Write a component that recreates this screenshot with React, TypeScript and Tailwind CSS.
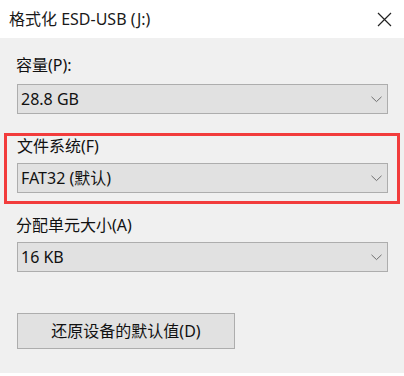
import React from "react";

function Chevron() {
  return (
    <svg width="11" height="7" viewBox="0 0 11 7" className="shrink-0">
      <path d="M0.5 0.8 L5.5 5.6 L10.5 0.8" fill="none" stroke="#6e6e6e" strokeWidth="1" />
    </svg>
  );
}

function Select({ value }: { value: string }) {
  return (
    <div className="flex h-[30px] w-[371px] items-center justify-between border border-[#adadad] bg-[#e1e1e1] pl-[3px] pr-[5px] text-[16px] text-[#111]">
      <span>{value}</span>
      <Chevron />
    </div>
  );
}

export default function App() {
  return (
    <div className="flex h-[376px] w-[404px] flex-col bg-white font-['Noto_Sans','Noto_Sans_CJK_SC',sans-serif]">
      <div className="flex h-[38px] items-center justify-between pl-[9px] pr-[12px]">
        <span className="text-[16px] text-[#1a1a1a]">格式化 ESD-USB (J:)</span>
        <svg width="15" height="15" viewBox="0 0 15 15">
          <path d="M1 1 L14 14 M14 1 L1 14" stroke="#222" strokeWidth="1.2" />
        </svg>
      </div>

      <div className="flex h-[335px] flex-col bg-[#f0f0f0]">
        <div className="mt-[17px] h-5 pl-[16px] text-[16px] leading-5 text-[#111]">容量(P):</div>
        <div className="mt-[9px] pl-[17px]">
          <Select value="28.8 GB" />
        </div>

        <div className="ml-[4px] mt-[19px] w-[396px] border-[3px] border-[#f23c3c] pb-[8px] pl-[10px]">
          <div className="h-5 text-[16px] leading-5 text-[#111]">文件系统(F)</div>
          <div className="mt-[7px]">
            <Select value="FAT32 (默认)" />
          </div>
        </div>

        <div className="mt-[11px] h-5 pl-[16px] text-[16px] leading-5 text-[#111]">分配单元大小(A)</div>
        <div className="mt-[7px] pl-[17px]">
          <Select value="16 KB" />
        </div>

        <div className="mt-[41px] pl-[17px]">
          <button className="flex h-[36px] w-[218px] items-center justify-center border border-[#adadad] bg-[#e1e1e1] text-[16px] text-[#111]">
            还原设备的默认值(D)
          </button>
        </div>
      </div>
    </div>
  );
}
